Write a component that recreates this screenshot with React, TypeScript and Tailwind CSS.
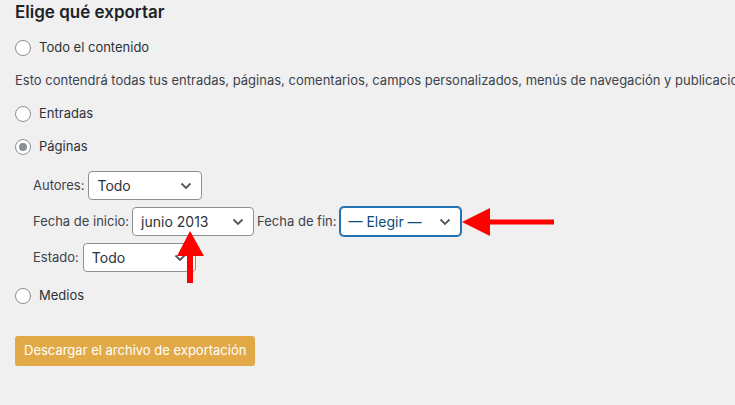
import type { ReactNode } from 'react';

function Radio({ checked = false, children }: { checked?: boolean; children: ReactNode }) {
  return (
    <label className="flex h-[20px] items-center gap-[8px] text-[13px] text-[#2c3338]">
      <span className="flex h-[16px] w-[16px] items-center justify-center rounded-full border border-[#8c8f94] bg-white">
        {checked && <span className="h-[8px] w-[8px] rounded-full bg-[#8c8f94]" />}
      </span>
      {children}
    </label>
  );
}

function Chevron() {
  return (
    <svg width="12" height="8" viewBox="0 0 12 8" className="shrink-0">
      <polyline points="1.5,1.5 6,6 10.5,1.5" fill="none" stroke="#50575e" strokeWidth="1.8" />
    </svg>
  );
}

function Select({
  value,
  width,
  focused = false,
}: {
  value: string;
  width: string;
  focused?: boolean;
}) {
  return (
    <div
      className={
        focused
          ? `flex h-[29px] items-center justify-between rounded-[4px] border border-[#2271b1] bg-white pl-[8px] pr-[9px] text-[14px] text-[#0a4b78] shadow-[0_0_0_1px_#2271b1] ${width}`
          : `flex h-[29px] items-center justify-between rounded-[4px] border border-[#8c8f94] bg-white pl-[8px] pr-[9px] text-[14px] text-[#2c3338] ${width}`
      }
    >
      <span>{value}</span>
      <Chevron />
    </div>
  );
}

export default function App() {
  return (
    <div
      className="relative h-[405px] w-[735px] overflow-hidden bg-[#f0f0f1] pl-[15px]"
      style={{ fontFamily: 'Inter, "Noto Sans", sans-serif' }}
    >
      <h2 className="flex h-[26px] items-center text-[17px] font-semibold text-[#1d2327]">
        Elige qué exportar
      </h2>

      <div className="mt-[12px]">
        <Radio>Todo el contenido</Radio>
      </div>
      <p className="mt-[13px] flex h-[20px] items-center whitespace-nowrap text-[13px] text-[#3c434a]">
        Esto contendrá todas tus entradas, páginas, comentarios, campos personalizados, menús de navegación y publicaciones personalizadas.
      </p>
      <div className="mt-[13px]">
        <Radio>Entradas</Radio>
      </div>
      <div className="mt-[13px]">
        <Radio checked>Páginas</Radio>
      </div>

      <div className="pl-[18px] text-[13px] text-[#3c434a]">
        <div className="mt-[14px] flex items-center gap-[4px]">
          <span>Autores:</span>
          <Select value="Todo" width="w-[114px]" />
        </div>
        <div className="mt-[7px] flex items-center gap-[3px]">
          <span>Fecha de inicio:</span>
          <Select value="junio 2013" width="w-[122px]" />
          <span>Fecha de fin:</span>
          <Select value="— Elegir —" width="w-[121px]" focused />
        </div>
        <div className="mt-[7px] flex items-center gap-[4px]">
          <span>Estado:</span>
          <Select value="Todo" width="w-[113px]" />
        </div>
      </div>

      <div className="mt-[14px]">
        <Radio>Medios</Radio>
      </div>

      <button className="mt-[30px] h-[30px] rounded-[3px] bg-[#e2a947] px-[9px] text-[13px] text-white">
        Descargar el archivo de exportación
      </button>

      <svg
        className="pointer-events-none absolute left-0 top-0"
        width="735"
        height="405"
        viewBox="0 0 735 405"
      >
        <polygon points="190,231 204,256 177,256" fill="#ff0000" />
        <rect x="187" y="254" width="6" height="29" fill="#ff0000" />
        <polygon points="462,222 490,208 490,236" fill="#ff0000" />
        <rect x="489" y="219.5" width="65" height="5" fill="#ff0000" />
      </svg>
    </div>
  );
}
